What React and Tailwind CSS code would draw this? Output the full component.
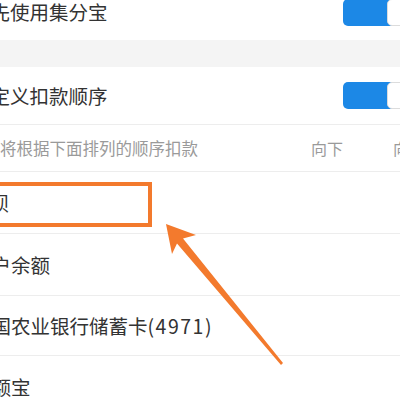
import React from 'react';

const FONT = '"Noto Sans CJK SC", "Noto Sans", sans-serif';

function Toggle() {
  return (
    <div className="relative -mr-[13px] h-[27px] w-[70px] shrink-0 rounded-[5px] bg-[#1c88e6]">
      <div className="absolute left-[44px] top-0 h-[27px] w-[26px] rounded-[5px] border border-[#dcdcdc] bg-white" />
    </div>
  );
}

function ListRow({ children, offset, height, last }) {
  return (
    <div
      className={
        'flex shrink-0 items-center whitespace-nowrap text-[19.5px] text-[#333] ' +
        (last ? '' : 'border-b border-[#ededed]')
      }
      style={{ height }}
    >
      <span style={{ marginLeft: offset }}>{children}</span>
    </div>
  );
}

export default function App() {
  return (
    <div
      className="relative h-[400px] w-[400px] overflow-hidden bg-white"
      style={{ fontFamily: FONT }}
    >
      <div className="flex flex-col">
        {/* 优先使用集分宝 */}
        <div className="-mt-[16px] flex h-[56px] items-center whitespace-nowrap text-[19.5px] text-[#333]">
          <span className="-ml-[29px]">优先使用集分宝</span>
          <div className="ml-auto">
            <Toggle />
          </div>
        </div>

        <div className="h-[27px] bg-[#f4f4f4]" />

        {/* 自定义扣款顺序 */}
        <div className="flex h-[58px] items-center whitespace-nowrap border-b border-[#ededed] text-[19.5px] text-[#333]">
          <span className="-ml-[29px]">自定义扣款顺序</span>
          <div className="ml-auto">
            <Toggle />
          </div>
        </div>

        {/* hint row */}
        <div className="flex h-[47px] items-center whitespace-nowrap border-b border-[#ededed] text-[16.5px] text-[#9a9a9a]">
          <span className="-ml-[33px] w-[344px] shrink-0">系统将根据下面排列的顺序扣款</span>
          <span className="shrink-0 text-[16px]">向下</span>
          <span className="ml-[50px] shrink-0 text-[16px]">向上</span>
        </div>

        <ListRow offset={-30} height={62}>花呗</ListRow>
        <ListRow offset={-28} height={62}>账户余额</ListRow>
        <ListRow offset={-28} height={60}>
          中国农业银行储蓄卡<span className="tracking-[1.5px]">(4971)</span>
        </ListRow>
        <ListRow offset={-28} height={62} last>余额宝</ListRow>
      </div>

      {/* annotation overlay */}
      <svg
        className="pointer-events-none absolute left-0 top-0"
        width="400"
        height="400"
        viewBox="0 0 400 400"
      >
        <rect x="-10" y="184" width="160" height="41" fill="none" stroke="#f37a2d" strokeWidth="4" />
        <polygon
          points="166,224 196,235 183,238.5 283,363 281,365 177,243.5 172,254"
          fill="#f37a2d"
        />
      </svg>
    </div>
  );
}
